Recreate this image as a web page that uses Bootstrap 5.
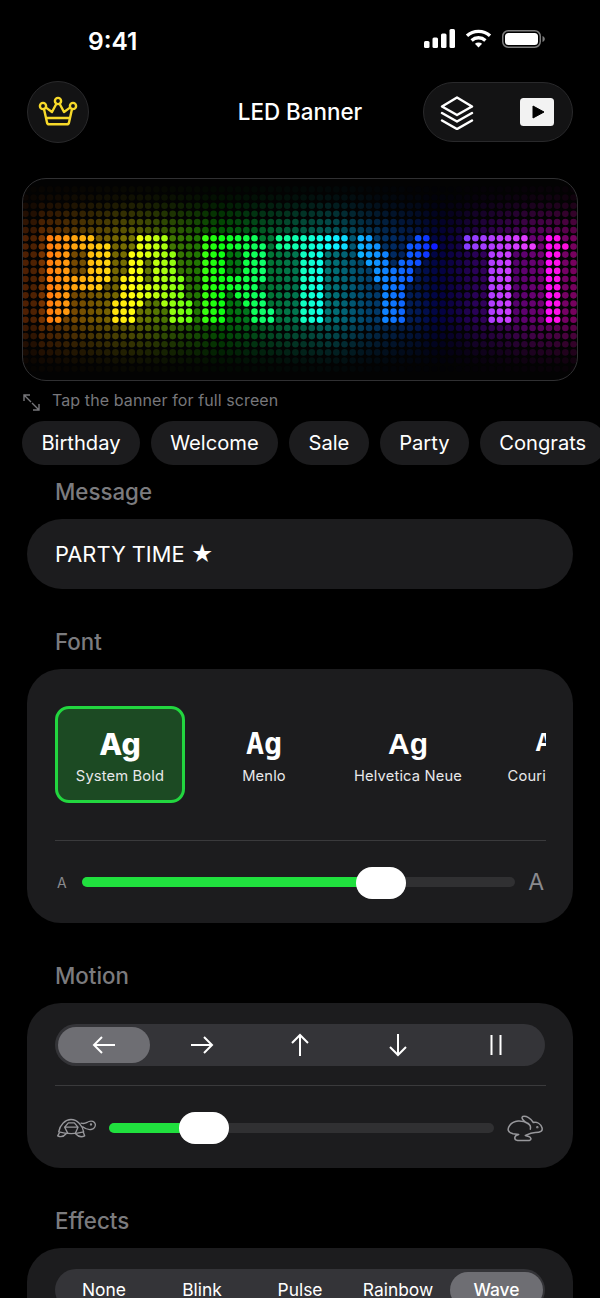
<!DOCTYPE html>
<html lang="en">
<head>
  <meta charset="UTF-8" />
  <meta name="viewport" content="width=device-width, initial-scale=1.0" />
  <title>LED Banner</title>
  <link href="https://cdn.jsdelivr.net/npm/bootstrap@5.3.2/dist/css/bootstrap.min.css" rel="stylesheet">
  <style>
    html, body { height: 1298px; overflow: hidden; background: #000; }
    body { font-family: Inter, "Noto Sans", sans-serif; color: #fff; }
    .status-row { height: 81px; padding: 29px 55px 0 88px; }
    .clock { font-size: 24.5px; font-weight: 600; line-height: 24px; }
    .top-row { display: grid; grid-template-columns: 1fr auto 1fr; align-items: center; height: 62px; padding: 0 27px; }
    .title-text { font-size: 22.4px; font-weight: 550; margin-top: -1px; }
    .crown-btn { width: 62px; height: 62px; background: #131314; border: 1.5px solid #29292b; }
    .view-pill { width: 150px; height: 60px; background: #131314; border: 1.5px solid #29292b; padding: 0 18.5px 0 15.5px; }
    .banner-box { margin: 35px 22px 0; height: 203px; border: 1.5px solid #303032; border-radius: 24px; overflow: hidden; background: #030303; }
    .banner-box canvas { display: block; margin: -1.5px; }
    .hint-row { padding: 9px 0 0 23px; height: 40px; gap: 12px; color: #77777b; font-size: 16px; letter-spacing: .1px; }
    .chip-row { padding-left: 22px; gap: 11px; height: 44px; }
    .chip-item { height: 44px; padding: 0 19.4px; background: #1c1c1e; font-size: 20.15px; }
    .sec-label { padding-left: 28px; margin: 0 27px; font-size: 22.3px; font-weight: 500; color: #7b7b7e; line-height: 30px; }
    .msg-input, .msg-input:focus { display: block; width: 546px; height: 70px; margin: 12px 27px 0; padding: 0 28px 1px; border: 0; border-radius: 35px; background: #1c1c1e; color: #fff; font-size: 21.8px; box-shadow: none; }
    .panel-box { margin: 0 27px; width: 546px; background: #1c1c1e; border-radius: 34px; padding: 0 27px 0 28px; overflow: hidden; }
    .font-row { gap: 14px; padding-top: 37px; height: 172px; border-bottom: 1px solid #3a3a3c; }
    .font-tile { width: 130px; height: 97px; flex-shrink: 0; padding-top: 16px; border-radius: 14px; border: 3px solid transparent; }
    .font-tile.picked { background: #1c4a23; border-color: #22d63f; }
    .ag-text { font-size: 30px; line-height: 38px; font-weight: 700; white-space: nowrap; }
    .tile-name { font-size: 14.7px; line-height: 20px; margin-top: 3px; color: #e8e8ea; white-space: nowrap; letter-spacing: .15px; }
    .slide-row { height: 82px; }
    .slide-track { position: relative; height: 10px; background: #303032; border-radius: 5px; flex: 1; }
    .slide-fill { height: 10px; background: #20e03e; border-radius: 5px; }
    .slide-thumb { position: absolute; top: -11px; width: 50px; height: 32px; border-radius: 16px; background: #fff; }
    .font-thumb { top: -10px; }
    .speed-row { height: 84px; }
    .seg-bar { height: 42px; background: #343438; border-radius: 21px; padding: 3px; margin-right: 1px; }
    .seg-item { width: 98px; height: 36px; flex-shrink: 0; font-size: 17.4px; }
    .seg-item.active-seg { width: 92px; background: #6e6e73; border-radius: 18px; margin-right: 3px; }
    .motion-line { height: 83px; padding-top: 21px; border-bottom: 1px solid #3a3a3c; }
    .size-a { color: #8a8a8e; }
  </style>
</head>
<body>
  <div class="status-row d-flex justify-content-between align-items-start">
    <div class="clock">9:41</div>
    <div class="d-flex align-items-center" style="gap:10px">
      <svg width="31" height="19" viewBox="0 0 31 19" fill="#fff">
        <rect x="0" y="12" width="5.5" height="7" rx="1.5"/><rect x="8.5" y="8.5" width="5.5" height="10.5" rx="1.5"/><rect x="17" y="4.5" width="5.5" height="14.5" rx="1.5"/><rect x="25.5" y="0" width="5.5" height="19" rx="1.5"/>
      </svg>
      <svg width="27" height="19" viewBox="0 0 27 19" fill="none" stroke="#fff" stroke-width="3.4">
        <path d="M2 6.8C8.4 .9 18.6 .9 25 6.8"/><path d="M6.6 11.4C10.5 7.9 16.5 7.9 20.4 11.4"/><path d="M13.5 18.4 9.9 14.8C11.9 13.2 15.1 13.2 17.1 14.8Z" fill="#fff" stroke="none"/>
      </svg>
      <svg width="43" height="18" viewBox="0 0 43 18">
        <rect x=".75" y=".75" width="37.5" height="16.5" rx="5.5" fill="none" stroke="#7d7d7d" stroke-width="1.5"/>
        <rect x="3" y="3" width="33" height="12" rx="3.5" fill="#fff"/>
        <path d="M40.5 6v6c1.4-.5 2.3-1.6 2.3-3s-.9-2.5-2.3-3Z" fill="#7d7d7d"/>
      </svg>
    </div>
  </div>

  <div class="top-row">
    <div class="crown-btn rounded-circle d-flex align-items-center justify-content-center">
      <svg width="40" height="32" viewBox="0 0 40 32" fill="none" stroke="#f7d92a" stroke-width="2.4" stroke-linejoin="round" stroke-linecap="round">
        <circle cx="5" cy="10" r="3.1"/><circle cx="20" cy="5" r="3.1"/><circle cx="35" cy="10" r="3.1"/>
        <path d="M8 11.6 14 16 18.4 7.8M21.6 7.8 26 16 32 11.6M6 13 9 26.5Q9.3 28.3 11 28.3H29Q30.7 28.3 31 26.5L34 13M8 22H32"/>
      </svg>
    </div>
    <div class="title-text">LED Banner</div>
    <div class="view-pill rounded-pill d-flex align-items-center justify-content-between ms-auto">
      <svg width="34" height="36" viewBox="0 -1.5 34 36" fill="none" stroke="#fff" stroke-width="2.5" stroke-linejoin="round" stroke-linecap="round">
        <path d="M17 2 32 11 17 19.5 2 11Z"/><path d="M2 17.5 17 26 32 17.5"/><path d="M2 25 17 33.5 32 25"/>
      </svg>
      <svg width="34" height="28" viewBox="0 0 34 28">
        <rect width="34" height="28" rx="3.5" fill="#f2f2f2"/><path d="M13 8 24 14 13 20Z" fill="#000" stroke="#000" stroke-linejoin="round"/>
      </svg>
    </div>
  </div>

  <div class="banner-box"><canvas id="ledCanvas" width="556" height="203"></canvas></div>

  <div class="hint-row d-flex align-items-start">
    <svg class="flex-shrink-0 mt-1" width="17" height="17" viewBox="0 0 17 17" fill="none" stroke="#77777b" stroke-width="1.4">
      <path d="M1 7V1H7M1 1 8 8M16 10V16H10M16 16 9 9"/>
    </svg>
    <span style="line-height:21px">Tap the banner for full screen</span>
  </div>

  <div class="chip-row d-flex text-nowrap">
    <div class="chip-item rounded-pill d-flex align-items-center flex-shrink-0">Birthday</div>
    <div class="chip-item rounded-pill d-flex align-items-center flex-shrink-0">Welcome</div>
    <div class="chip-item rounded-pill d-flex align-items-center flex-shrink-0">Sale</div>
    <div class="chip-item rounded-pill d-flex align-items-center flex-shrink-0">Party</div>
    <div class="chip-item rounded-pill d-flex align-items-center flex-shrink-0">Congrats</div>
  </div>

  <div class="sec-label" style="margin-top:12px">Message</div>
  <input class="msg-input form-control" type="text" value="PARTY TIME ★">

  <div class="sec-label" style="margin-top:38px">Font</div>
  <div class="panel-box" style="margin-top:12px;height:254px">
    <div class="font-row d-flex overflow-hidden">
      <div class="font-tile picked text-center">
        <div class="ag-text" style="font-weight:800">Ag</div>
        <div class="tile-name">System Bold</div>
      </div>
      <div class="font-tile text-center">
        <div class="ag-text" style="font-family:'DejaVu Sans Mono',monospace">Ag</div>
        <div class="tile-name">Menlo</div>
      </div>
      <div class="font-tile text-center">
        <div class="ag-text" style="font-family:'Liberation Sans',sans-serif">Ag</div>
        <div class="tile-name">Helvetica Neue</div>
      </div>
      <div class="font-tile text-center">
        <div class="ag-text" style="font-family:'Liberation Mono',monospace;font-size:27px">Ag</div>
        <div class="tile-name">Courier New</div>
      </div>
    </div>
    <div class="slide-row d-flex align-items-center">
      <span class="size-a" style="font-size:14px;width:27px;padding-left:2px">A</span>
      <div class="slide-track">
        <div class="slide-fill" style="width:69%"></div>
        <div class="slide-thumb font-thumb" style="left:274px"></div>
      </div>
      <span class="size-a text-end" style="font-size:23px;width:31px;padding-right:2px">A</span>
    </div>
  </div>

  <div class="sec-label" style="margin-top:38px">Motion</div>
  <div class="panel-box" style="margin-top:12px;height:165px">
    <div class="motion-line">
      <div class="seg-bar d-flex align-items-center">
        <div class="seg-item active-seg d-flex align-items-center justify-content-center">
          <svg width="24" height="18" viewBox="0 0 24 18" fill="none" stroke="#fff" stroke-width="2"><path d="M23 9H2M10 1 2 9 10 17"/></svg>
        </div>
        <div class="seg-item d-flex align-items-center justify-content-center">
          <svg width="24" height="18" viewBox="0 0 24 18" fill="none" stroke="#fff" stroke-width="2"><path d="M1 9H22M14 1 22 9 14 17"/></svg>
        </div>
        <div class="seg-item d-flex align-items-center justify-content-center">
          <svg width="18" height="24" viewBox="0 0 18 24" fill="none" stroke="#fff" stroke-width="2"><path d="M9 23V2M1 10 9 2 17 10"/></svg>
        </div>
        <div class="seg-item d-flex align-items-center justify-content-center">
          <svg width="18" height="24" viewBox="0 0 18 24" fill="none" stroke="#fff" stroke-width="2"><path d="M9 1V22M1 14 9 22 17 14"/></svg>
        </div>
        <div class="seg-item d-flex align-items-center justify-content-center">
          <svg width="12" height="20" viewBox="0 0 12 20" fill="none" stroke="#fff" stroke-width="2"><path d="M1.5 0V20M10.5 0V20"/></svg>
        </div>
      </div>
    </div>
    <div class="speed-row d-flex align-items-center">
      <div style="width:54px" class="flex-shrink-0">
        <svg class="d-block" width="40" height="22" viewBox="80 50 120 65" fill="none" stroke="#98989c" stroke-width="4" stroke-linejoin="round" stroke-linecap="round" style="margin-left:2px">
          <path d="M85 94C89 72 105 57 122 57 141 57 156 74 160 94 135 101 110 101 85 94Z"/>
          <path d="M103 80 114 67H132L143 80 135 98M103 80 112 98M103 80H143"/>
          <path d="M157 79C163 84 172 88 182 87 191 86 196 79 195 71 193 63 184 60 176 63 168 66 165 72 152 68"/>
          <path d="M87 97 82 106C90 110 100 109 108 99M135 99C142 107 153 111 163 106L159 95"/>
          <circle cx="182" cy="72" r="1.5" fill="#98989c"/>
        </svg>
      </div>
      <div class="slide-track">
        <div class="slide-fill" style="width:23%"></div>
        <div class="slide-thumb" style="left:70px"></div>
      </div>
      <div style="width:52px" class="flex-shrink-0 d-flex justify-content-end">
        <svg width="36" height="27" viewBox="50 44 108 80" fill="none" stroke="#98989c" stroke-width="4.5" stroke-linejoin="round" stroke-linecap="round" style="margin-right:3px">
          <path d="M155 82C151 70 140 64 129 66 122 54 108 45 97 48 91 52 100 63 113 69 95 58 70 58 58 75 50 86 52 95 68 100L85 102C70 105 70 118 82 120H117C125 118 122 110 115 108L105 105C115 100 122 96 135 96 150 96 158 92 155 82Z"/>
          <path d="M113 69C118 72 122 78 120 86"/>
          <circle cx="141" cy="80" r="1.3" fill="#98989c"/>
        </svg>
      </div>
    </div>
  </div>

  <div class="sec-label" style="margin-top:38px">Effects</div>
  <div class="panel-box" style="margin-top:12px;height:120px;padding-top:21px">
    <div class="seg-bar d-flex align-items-center" style="padding-left:0">
      <div class="seg-item d-flex align-items-center justify-content-center">None</div>
      <div class="seg-item d-flex align-items-center justify-content-center">Blink</div>
      <div class="seg-item d-flex align-items-center justify-content-center">Pulse</div>
      <div class="seg-item d-flex align-items-center justify-content-center">Rainbow</div>
      <div class="seg-item active-seg d-flex align-items-center justify-content-center" style="margin:0 0 0 3px;width:93px;font-weight:500">Wave</div>
    </div>
  </div>

  <script src="https://cdn.jsdelivr.net/npm/bootstrap@5.3.2/dist/js/bootstrap.bundle.min.js"></script>
  <script>
    // lit columns per row (11 rows), col 0 sits at x=50
    const spans = [
      [[0,5],[11,14],[19,25],[28,36],[38,39],[45,46],[51,58],[61,62]],
      [[0,7],[11,14],[19,26],[28,36],[38,40],[44,47],[51,59],[61,63]],
      [[0,2],[5,7],[10,15],[19,21],[24,26],[31,33],[38,41],[44,46],[54,56],[61,62]],
      [[0,2],[5,7],[10,11],[13,15],[19,21],[24,26],[31,33],[39,41],[43,45],[54,56],[61,62]],
      [[0,2],[5,7],[10,11],[13,15],[19,21],[24,26],[31,33],[40,44],[54,56],[61,62]],
      [[0,7],[9,11],[13,16],[19,26],[31,33],[40,44],[54,56],[61,62]],
      [[0,6],[9,16],[19,25],[31,33],[41,43],[54,56],[61,62]],
      [[0,2],[9,16],[19,21],[23,26],[31,33],[41,43],[54,56],[61,62]],
      [[0,2],[8,11],[14,17],[19,21],[24,26],[31,33],[41,43],[54,56],[61,62]],
      [[0,2],[8,10],[15,17],[19,21],[25,27],[31,33],[41,43],[54,56],[61,62]],
      [[0,1],[8,10],[15,17],[19,21],[25,27],[31,33],[41,43],[54,56],[61,62]]
    ];
    // x position -> hue, read off the picture
    const hueStops = [[20,22],[50,28],[130,58],[220,120],[310,168],[370,205],[420,225],[470,265],[500,280],[580,315]];
    // brightness of unlit rows above and below the text
    const topFade = [0.75, 0.6, 0.42, 0.25, 0.12, 0.05];
    const bottomFade = [0.75, 0.6, 0.42, 0.27, 0.14, 0.05];

    function isLit(c, r) {
      if (r < 0 || r > 10) return false;
      return spans[r].some(s => c >= s[0] && c <= s[1]);
    }

    function hueAt(x) {
      for (let i = 1; i < hueStops.length; i++) {
        if (x <= hueStops[i][0]) {
          const a = hueStops[i - 1], b = hueStops[i];
          return a[1] + (b[1] - a[1]) * (x - a[0]) / (b[0] - a[0]);
        }
      }
      return 315;
    }

    const ctx = document.getElementById('ledCanvas').getContext('2d');
    const PITCH = 8.18;
    for (let r = -6; r <= 16; r++) {
      const y = 238.3 + r * 8.15 - 178;
      let fade = 1;
      if (r < 0) fade = topFade[-r - 1];
      if (r > 10) fade = bottomFade[r - 11];
      for (let c = -3; c <= 64; c++) {
        const px = 50 + c * PITCH;
        const hue = hueAt(px);
        const x = px - 22;
        if (isLit(c, r)) {
          ctx.fillStyle = `hsl(${hue}, 100%, ${hue > 255 && hue < 295 ? 62 : 53}%)`;
          ctx.globalAlpha = 1;
        } else {
          // the blue part of the strip reads much darker
          const blueDip = 1 - 0.45 * Math.exp(-Math.pow((hue - 245) / 32, 2));
          ctx.fillStyle = `hsl(${hue}, 100%, 50%)`;
          ctx.globalAlpha = 0.46 * fade * blueDip;
          if (c < -1) ctx.globalAlpha *= 0.65;
        }
        ctx.beginPath();
        ctx.arc(x, y, 3.3, 0, Math.PI * 2);
        ctx.fill();
      }
    }
  </script>
</body>
</html>
